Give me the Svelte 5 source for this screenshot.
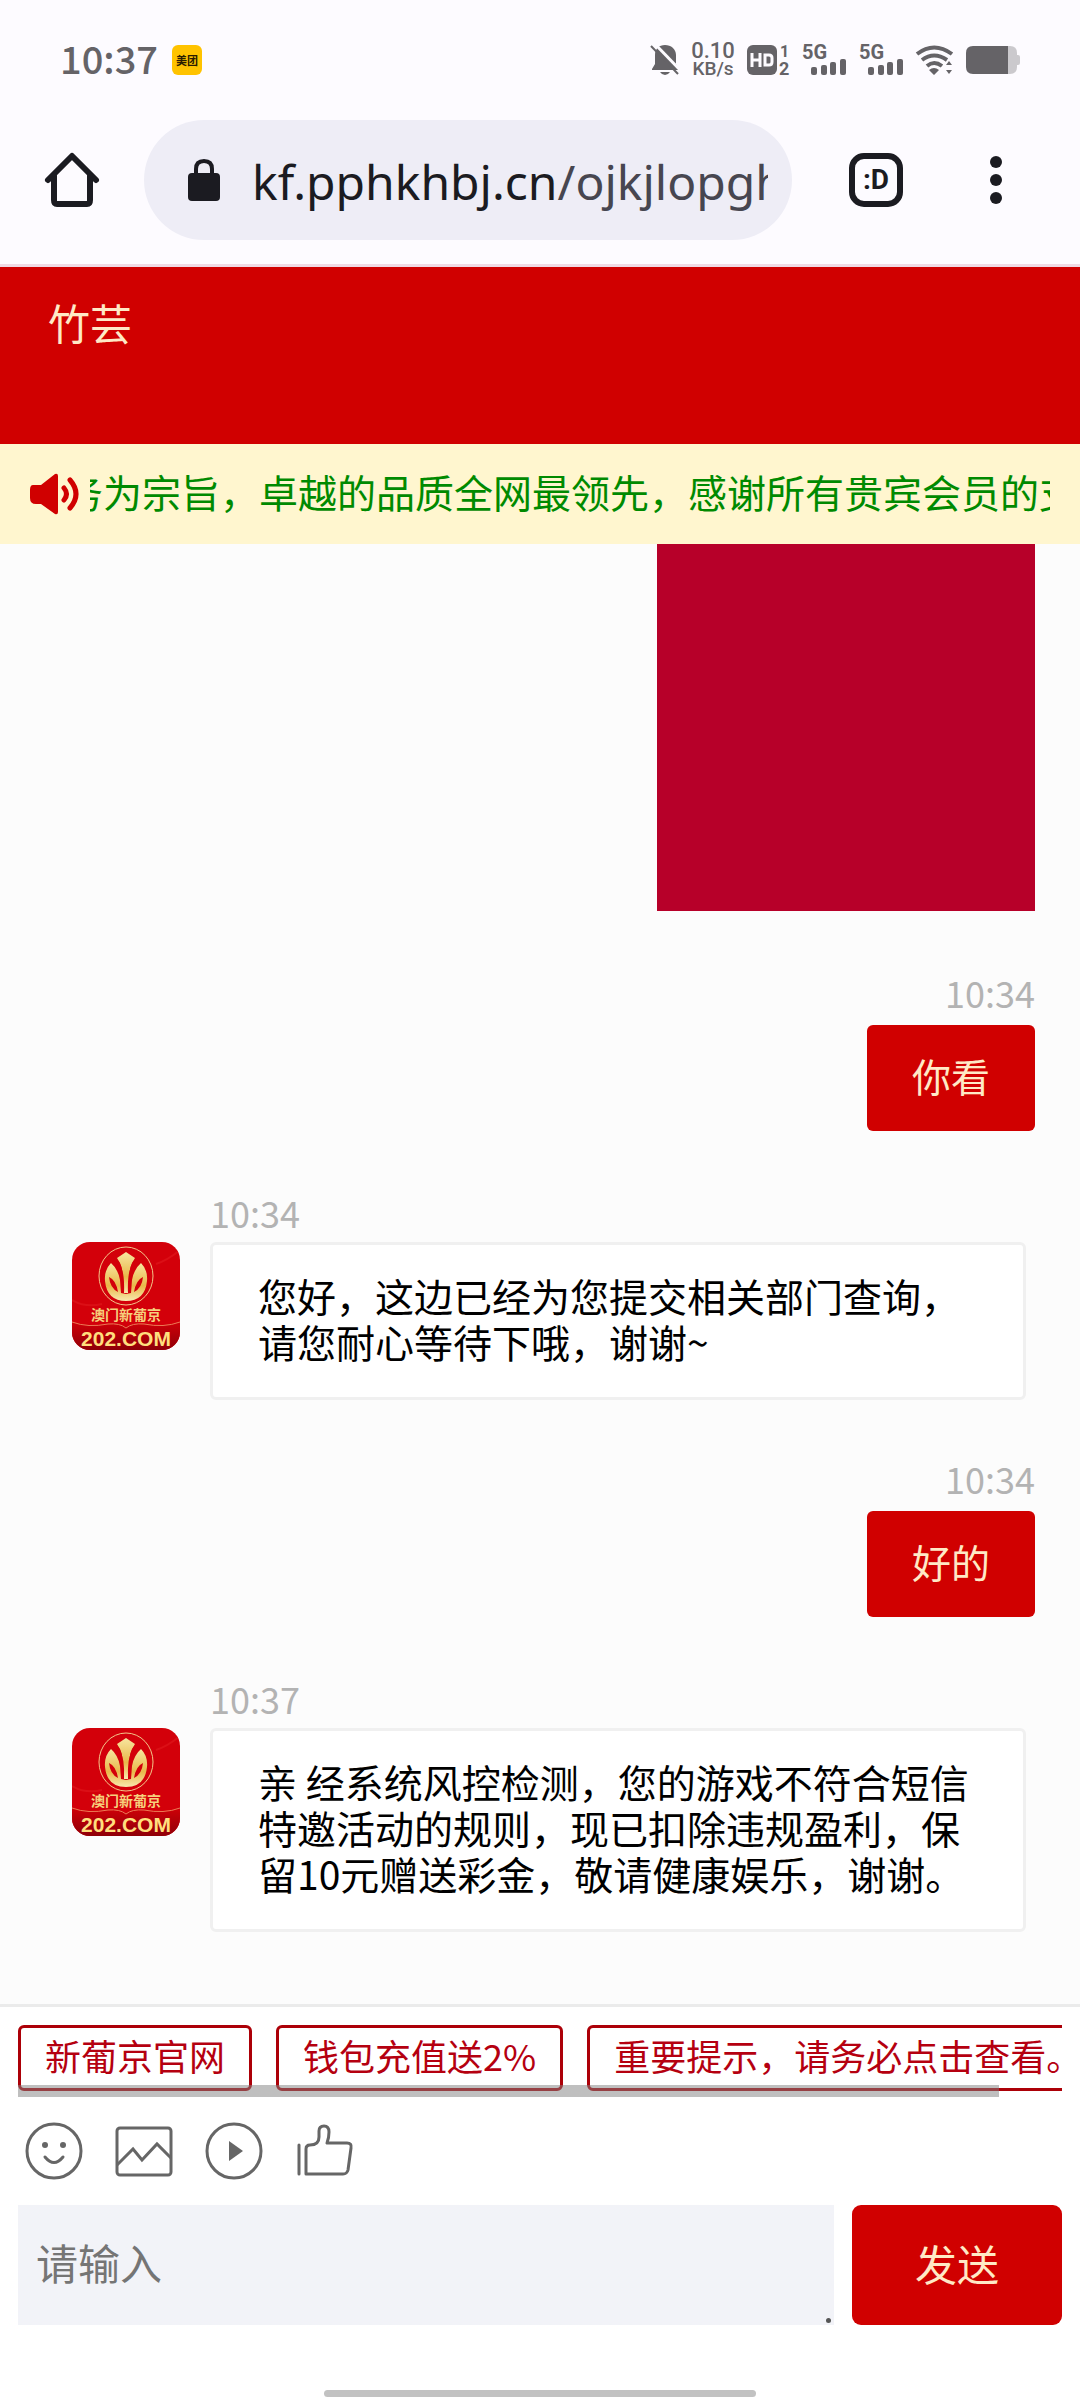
<script lang="ts">
  interface Message {
    id: number;
    from: "me" | "agent";
    time?: string;
    text?: string;
  }

  const messages: Message[] = [
    { id: 1, from: "me" },
    { id: 2, from: "me", time: "10:34", text: "你看" },
    { id: 3, from: "agent", time: "10:34", text: "您好，这边已经为您提交相关部门查询，请您耐心等待下哦，谢谢~" },
    { id: 4, from: "me", time: "10:34", text: "好的" },
    {
      id: 5,
      from: "agent",
      time: "10:37",
      text: "亲 经系统风控检测，您的游戏不符合短信特邀活动的规则，现已扣除违规盈利，保留10元赠送彩金，敬请健康娱乐，谢谢。",
    },
  ];

  const links = ["新葡京官网", "钱包充值送2%", "重要提示，请务必点击查看。"];

  let draft = $state("");
</script>

{#snippet signal()}
  <svg class="signal" width="45" height="32" viewBox="0 0 45 32" fill="currentColor">
    <text x="0" y="15" font-size="20" font-weight="700">5G</text>
    <rect x="9" y="23" width="6" height="8" rx="2" />
    <rect x="19" y="21" width="6" height="10" rx="2" />
    <rect x="28" y="18" width="6" height="13" rx="2" />
    <rect x="38" y="15" width="6" height="16" rx="2" />
  </svg>
{/snippet}

{#snippet avatar()}
  <svg class="avatar" width="108" height="108" viewBox="0 0 108 108">
    <defs>
      <linearGradient id="gold" x1="0" y1="0" x2="0" y2="1">
        <stop offset="0" stop-color="#f7e6a0" />
        <stop offset="0.6" stop-color="#e9b84a" />
        <stop offset="1" stop-color="#f8e9ae" />
      </linearGradient>
      <linearGradient id="foot" x1="0" y1="0" x2="0" y2="1">
        <stop offset="0" stop-color="#cf0008" />
        <stop offset="1" stop-color="#8f0008" />
      </linearGradient>
    </defs>
    <rect width="108" height="108" fill="#d3000a" />
    <path d="M0 58q14 8 30 4M84 22q12-4 24-14" stroke="#db0f16" stroke-width="2" fill="none" />
    <path d="M0 80q16 6 36 2 12-1 18 4 6-5 18-4 20 4 36-2v28H0z" fill="url(#foot)" />
    <path d="M0 80q16 6 36 2 12-1 18 4 6-5 18-4 20 4 36-2" fill="none" stroke="#eb7a55" />
    <ellipse cx="54" cy="34" rx="27" ry="29" fill="none" stroke="#f3c58a" />
    <g fill="url(#gold)">
      <path d="M54 10l9 6-3 5q-4 8-3 30h-6q1-22-3-30l-3-5z" />
      <path d="M39 21q-7 7-6 18 2 20 21 20t21-20q1-11-6-18-7 6-9 17l-1 13-5 1-5-1-1-13q-2-11-9-17z" />
    </g>
    <path d="M37 35q7 3 9 15-8-4-9-15zM71 35q-7 3-9 15 8-4 9-15z" fill="#d3000a" />
    <path d="M46 20q6 10 5 31M62 20q-6 10-5 31" fill="none" stroke="#d3000a" stroke-width="2" />
    <text x="54" y="78" font-size="14" font-weight="700" text-anchor="middle" fill="#f6d07c">澳门新葡京</text>
    <text class="domain" x="54" y="104" font-size="21" font-weight="700" text-anchor="middle" fill="#ffdf7e">202.COM</text>
  </svg>
{/snippet}

<div class="page">
  <div class="status-bar">
    <span class="clock">10:37</span>
    <span class="app-badge">美团</span>
    <div class="status-icons">
      <svg width="28" height="32" viewBox="0 0 28 32" fill="currentColor">
        <path d="M14 1c6 0 11 4 11 10v9l3 5v1H1v-1l3-5v-9C4 5 8 1 14 1zM9 28h10q-2 3-5 3t-5-3z" />
        <path d="M3-1l28 29" stroke="#fdfbff" stroke-width="3" />
        <path d="M0 2l27 28" stroke="currentColor" stroke-width="2" />
      </svg>
      <span class="speed"><b>0.10</b><b>KB/s</b></span>
      <svg width="43" height="32" viewBox="0 0 43 32" fill="currentColor">
        <rect y="1" width="30" height="30" rx="6" />
        <path d="M5 9v14M13 9v14M5 16h8M18 11v10h4q3 0 3-3v-4q0-3-3-3z" fill="none" stroke="#fdfbff" stroke-width="3" />
        <text x="33" y="13" font-size="16" font-weight="700">1</text>
        <text x="32" y="31" font-size="18" font-weight="700">2</text>
      </svg>
      {@render signal()}
      {@render signal()}
      <svg width="38" height="32" viewBox="0 0 38 32" fill="none" stroke="currentColor" stroke-width="4">
        <path d="M1 10q17-13 35 0M6 16q12-9 25 0M11 22q7-6 15 0" />
        <path d="M13 26q5-4 10 0l-5 5zM30 21l3-4 3 4zM30 26l3 4 3-4z" fill="currentColor" stroke="none" />
      </svg>
      <svg width="54" height="28" viewBox="0 0 54 28">
        <path d="M42 0h2q7 0 7 7v2h1q2 0 2 2v6q0 2-2 2h-1v2q0 7-7 7h-2z" fill="#cbc9cd" />
        <path d="M7 0h35v28H7q-7 0-7-7V7q0-7 7-7z" fill="currentColor" />
      </svg>
    </div>
  </div>

  <div class="toolbar">
    <button class="tool" aria-label="主页">
      <svg width="72" height="72" viewBox="0 0 72 72" fill="none" stroke="currentColor" stroke-width="6" stroke-linecap="round" stroke-linejoin="round">
        <path d="M12 36l24-24 24 24" />
        <path d="M18 32v24q0 4 3 4h30q3 0 3-4V32" />
      </svg>
    </button>
    <div class="address">
      <svg width="32" height="44" viewBox="0 0 32 44">
        <path d="M8 17v-6q0-8 8-8t8 8v6" fill="none" stroke="currentColor" stroke-width="4" />
        <rect y="15" width="32" height="28" rx="4" fill="currentColor" />
      </svg>
      <span class="url">kf.pphkhbj.cn<span class="path">/ojkjlopgh</span></span>
    </div>
    <button class="tool" aria-label="标签页">
      <span class="tabs">:D</span>
    </button>
    <button class="tool" aria-label="菜单">
      <svg width="72" height="72" viewBox="0 0 72 72" fill="currentColor">
        <circle cx="36" cy="18" r="6" />
        <circle cx="36" cy="36" r="6" />
        <circle cx="36" cy="54" r="6" />
      </svg>
    </button>
  </div>

  <header class="agent-name">竹芸</header>

  <div class="notice">
    <svg width="48" height="42" viewBox="0 0 48 42">
      <path d="M3 12h8L25 1q3-1 3 2v36q0 3-3 2L11 31H6q-6 0-6-6v-8q0-5 3-5z" fill="#d00000" />
      <path d="M34 15q5 6 0 12M40 7q12 14 0 28" fill="none" stroke="#d00000" stroke-width="5" stroke-linecap="round" />
    </svg>
    <div class="marquee"><span>务为宗旨，卓越的品质全网最领先，感谢所有贵宾会员的支持</span></div>
  </div>

  <main class="chat">
    {#each messages as message (message.id)}
      {#if message.from === "me"}
        <div class="message mine">
          {#if message.text}
            <time>{message.time}</time>
            <p class="bubble">{message.text}</p>
          {:else}
            <div class="picture"></div>
          {/if}
        </div>
      {:else}
        <div class="message theirs">
          {@render avatar()}
          <div class="body">
            <time>{message.time}</time>
            <p class="bubble">{message.text}</p>
          </div>
        </div>
      {/if}
    {/each}
  </main>

  <footer>
    <div class="links">
      <div class="links-row">
        {#each links as link}
          <a href="#top">{link}</a>
        {/each}
      </div>
      <div class="scroll-thumb"></div>
    </div>

    <div class="actions">
      <button aria-label="表情">
        <svg width="60" height="60" viewBox="0 0 60 60">
          <circle cx="30" cy="30" r="27" />
          <path d="M21 36q9 11 18 0" stroke-linecap="round" />
          <circle class="solid" cx="21" cy="24" r="3" />
          <circle class="solid" cx="39" cy="24" r="3" />
        </svg>
      </button>
      <button aria-label="图片">
        <svg width="60" height="60" viewBox="0 0 60 60">
          <rect x="3" y="7" width="54" height="47" rx="3" />
          <path d="M3 44l16-16 9 11 15-16 14 14" />
        </svg>
      </button>
      <button aria-label="视频">
        <svg width="60" height="60" viewBox="0 0 60 60">
          <circle cx="30" cy="30" r="27" />
          <path class="solid" d="M25 20l14 10-14 10z" />
        </svg>
      </button>
      <button aria-label="评价">
        <svg width="60" height="60" viewBox="0 0 60 60" stroke-linecap="round" stroke-linejoin="round">
          <path d="M5 24v29" />
          <path d="M12 53V28q0-4 4-4 9 0 9-8V10q0-5 5-5t5 6q0 6-2 11h20q5 0 4 5l-3 22q-1 4-5 4z" />
        </svg>
      </button>
    </div>

    <form class="compose" onsubmit={(e) => e.preventDefault()}>
      <div class="field">
        <textarea bind:value={draft} placeholder="请输入" aria-label="请输入"></textarea>
        <span class="grip"></span>
      </div>
      <button class="send">发送</button>
    </form>

    <div class="home-bar"></div>
  </footer>
</div>

<style>
  :global(body) {
    margin: 0;
    background: #fff;
  }

  .page {
    display: flex;
    flex-direction: column;
    min-height: 100vh;
    font-family: "Noto Sans CJK SC", sans-serif;
    font-size: 39px;
    line-height: 46px;
    color: #000;
  }

  svg {
    display: block;
    flex-shrink: 0;
    overflow: visible;
  }

  button {
    padding: 0;
    border: none;
    background: none;
    color: inherit;
    font-family: inherit;
    cursor: pointer;
  }

  .status-bar {
    display: flex;
    align-items: center;
    height: 120px;
    padding: 0 60px;
    background: #fdfbff;
    color: #656367;
  }

  .clock {
    padding-bottom: 4px;
    font-size: 38px;
    font-weight: 500;
  }

  .app-badge {
    width: 30px;
    height: 30px;
    margin-left: 14px;
    border-radius: 6px;
    background: #ffc300;
    color: #2b1c00;
    font-size: 11px;
    font-weight: 700;
    line-height: 30px;
    text-align: center;
  }

  .status-icons {
    display: flex;
    align-items: center;
    gap: 12px;
    margin-left: auto;
    font-family: Roboto, sans-serif;
  }

  .speed {
    display: flex;
    flex-direction: column;
    align-items: center;
    min-width: 44px;
    font-size: 19px;
    line-height: 18px;
  }

  .speed b {
    font-weight: 500;
  }

  .speed b:first-child {
    font-size: 22px;
  }

  .toolbar {
    display: flex;
    align-items: center;
    padding: 0 48px 24px 36px;
    border-bottom: 3px solid #efdae4;
    background: #fdfbff;
    color: #1b1b21;
  }

  .tool {
    display: flex;
    align-items: center;
    justify-content: center;
    width: 72px;
    height: 72px;
  }

  .address {
    display: flex;
    flex: 1;
    align-items: center;
    gap: 32px;
    min-width: 0;
    height: 120px;
    margin-left: 36px;
    padding: 0 24px 0 44px;
    box-sizing: border-box;
    border-radius: 60px;
    background: #eeedf6;
  }

  .address + .tool,
  .tool + .tool {
    margin-left: 48px;
  }

  .url {
    flex: 1;
    padding-top: 4px;
    overflow: hidden;
    font-family: "Noto Sans", sans-serif;
    font-size: 48px;
    line-height: 72px;
    white-space: nowrap;
  }

  .path {
    color: #474650;
  }

  .tabs {
    width: 54px;
    height: 54px;
    box-sizing: border-box;
    border: 6px solid currentColor;
    border-radius: 15px;
    font-family: Roboto, sans-serif;
    font-size: 28px;
    font-weight: 700;
    line-height: 42px;
    text-align: center;
  }

  .agent-name {
    height: 177px;
    padding: 25px 48px;
    box-sizing: border-box;
    background: #d00000;
    color: #ffe9c6;
    font-size: 42px;
    line-height: 60px;
  }

  .notice {
    display: flex;
    align-items: center;
    gap: 12px;
    height: 100px;
    padding: 0 30px;
    background: #fff6cf;
    color: #008a00;
  }

  .marquee {
    flex: 1;
    padding-bottom: 6px;
    overflow: hidden;
    white-space: nowrap;
  }

  .marquee span {
    margin-left: -26px;
  }

  .chat {
    display: flex;
    flex: 1;
    flex-direction: column;
    gap: 57px;
    padding: 0 45px 72px 72px;
    background: #fcfcfc;
  }

  .message time {
    padding-bottom: 6px;
    color: #b3b3b3;
    font-size: 36px;
    line-height: 42px;
  }

  .bubble {
    margin: 0;
    padding: 27px 45px 33px;
    border-radius: 6px;
  }

  .mine {
    display: flex;
    flex-direction: column;
    align-items: flex-end;
    gap: 6px;
    padding-bottom: 3px;
  }

  .mine .bubble {
    background: #d00000;
    color: #ffe9c6;
  }

  .picture {
    width: 378px;
    height: 367px;
    background: #b70029;
  }

  .theirs {
    display: flex;
    align-items: flex-start;
    gap: 30px;
    padding-right: 9px;
  }

  .theirs .avatar {
    margin-top: 51px;
    overflow: hidden;
    border-radius: 18px;
  }

  .theirs .body {
    display: flex;
    flex: 1;
    flex-direction: column;
    gap: 3px;
  }

  .theirs .bubble {
    border: 3px solid #f0f0f0;
    background: #fff;
  }

  .domain {
    font-family: "Liberation Sans", sans-serif;
  }

  footer {
    padding: 18px 18px 3px;
    border-top: 3px solid #ebebeb;
    background: #fff;
  }

  .links {
    position: relative;
    padding-bottom: 6px;
  }

  .links-row {
    display: flex;
    gap: 24px;
    overflow-x: auto;
    scrollbar-width: none;
  }

  .links a {
    flex-shrink: 0;
    padding: 0 24px 6px;
    border: 3px solid #ac0008;
    border-radius: 6px;
    color: #b50010;
    font-size: 36px;
    line-height: 54px;
    text-decoration: none;
  }

  .scroll-thumb {
    position: absolute;
    bottom: 0;
    left: 0;
    width: 94%;
    height: 12px;
    background: rgba(128, 128, 128, 0.5);
  }

  .actions {
    display: flex;
    gap: 30px;
    padding: 24px 6px;
  }

  .actions svg {
    fill: none;
    stroke: #666;
    stroke-width: 3;
  }

  .actions .solid {
    fill: #666;
    stroke: none;
  }

  .compose {
    display: flex;
    gap: 18px;
    height: 120px;
  }

  .field {
    position: relative;
    flex: 1;
  }

  textarea {
    display: block;
    width: 100%;
    height: 100%;
    padding: 27px 18px 33px;
    box-sizing: border-box;
    border: none;
    outline: none;
    resize: none;
    background: #f2f3f8;
    font-family: inherit;
    font-size: 42px;
    line-height: 60px;
  }

  textarea::placeholder {
    color: #757575;
  }

  .grip {
    position: absolute;
    right: 3px;
    bottom: 2px;
    width: 5px;
    height: 5px;
    border-radius: 50%;
    background: #555;
  }

  .send {
    width: 210px;
    padding-bottom: 6px;
    border-radius: 9px;
    background: #d00000;
    color: #ffe9c6;
    font-size: 42px;
  }

  .home-bar {
    width: 432px;
    height: 7px;
    margin: 65px auto 0;
    border-radius: 4px;
    background: #c2c2c2;
  }
</style>
